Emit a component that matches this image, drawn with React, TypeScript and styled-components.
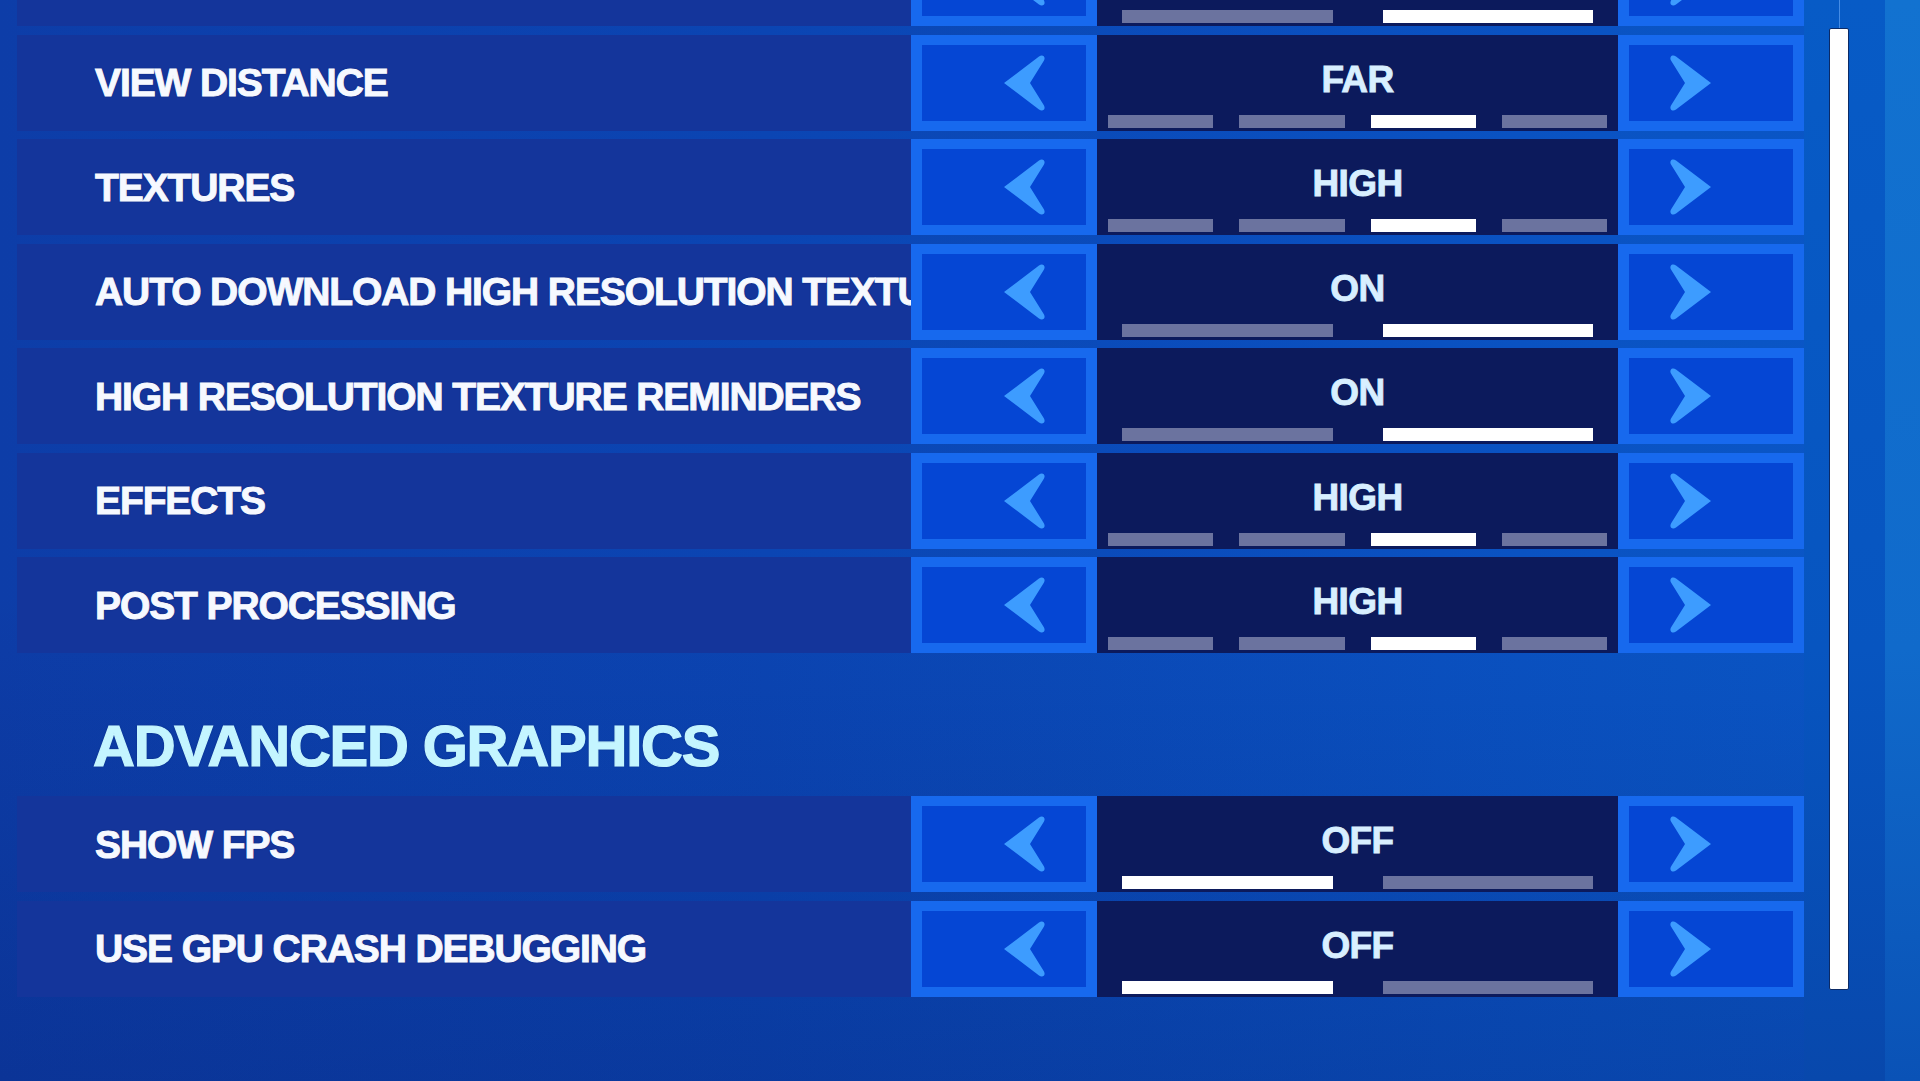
import React from "react";
import styled, { createGlobalStyle } from "styled-components";

const GlobalStyle = createGlobalStyle`
  html, body {
    margin: 0;
    padding: 0;
    width: 1920px;
    height: 1081px;
    overflow: hidden;
    background: #0b3ea6;
  }
  * {
    box-sizing: border-box;
  }
`;

const Screen = styled.div`
  width: 1920px;
  height: 1081px;
  display: flex;
  overflow: hidden;
  font-family: "Liberation Sans", Arial, sans-serif;
  font-weight: 700;
  background: linear-gradient(180deg, rgba(4, 20, 90, 0) 55%, rgba(4, 20, 90, 0.22) 100%),
    linear-gradient(90deg, #0d3da8 0%, #0b45b3 40%, #0a51c1 75%, #0a57c7 100%);
`;

const Main = styled.div`
  width: 1804px;
  height: 1081px;
  padding-left: 17px;
  overflow: hidden;
`;

// the list is scrolled, so the first row sits mostly above the top edge
const List = styled.div`
  display: flex;
  flex-direction: column;
  margin-top: -70px;
`;

const Group = styled.div`
  display: flex;
  flex-direction: column;
  gap: 8.5px;
`;

const Heading = styled.h2`
  margin: 64px 0 21px;
  padding-left: 76px;
  height: 58px;
  font-size: 58px;
  line-height: 58px;
  font-weight: 700;
  letter-spacing: -1.2px;
  color: #c4f5ff;
  -webkit-text-stroke: 1.2px #c4f5ff;
  text-shadow: 0 0 2px rgba(0, 10, 60, 0.6);
  white-space: nowrap;
`;

const Row = styled.div`
  display: grid;
  grid-template-columns: 894px 186px 521px 186px;
  height: 96px;
`;

const Label = styled.div`
  display: flex;
  align-items: center;
  padding-left: 78px;
  background: #14359b;
  overflow: hidden;
  white-space: nowrap;
  font-size: 39px;
  line-height: 39px;
  letter-spacing: -1.1px;
  color: #f6f9ff;
  -webkit-text-stroke: 1px #f6f9ff;
  text-shadow: 0 0 2px rgba(0, 10, 60, 0.6);
`;

const ArrowButton = styled.div<{ $side: "left" | "right" }>`
  display: flex;
  align-items: center;
  justify-content: center;
  border-style: solid;
  border-color: #1769ee;
  border-width: 10px 11px;
  background: #0546d4;
  padding-left: ${(p) => (p.$side === "left" ? "40px" : "0")};
  padding-right: ${(p) => (p.$side === "right" ? "40px" : "0")};
`;

const ValuePanel = styled.div`
  display: flex;
  flex-direction: column;
  padding: 26px 0 3px;
  background: #0c1a5c;
`;

const ValueText = styled.div`
  height: 37px;
  text-align: center;
  font-size: 37px;
  line-height: 37px;
  letter-spacing: -0.6px;
  color: #d8efff;
  -webkit-text-stroke: 0.9px #d8efff;
`;

const Bars = styled.div<{ $count: number }>`
  display: flex;
  margin-top: 17px;
  height: 13px;
  gap: ${(p) => (p.$count > 2 ? "26px" : "50px")};
  padding: 0 ${(p) => (p.$count > 2 ? "11px" : "25px")};
`;

const Bar = styled.div<{ $active: boolean }>`
  flex: 1;
  background: ${(p) => (p.$active ? "#ffffff" : "#6b739f")};
`;

const ScrollArea = styled.div`
  width: 81px;
  height: 1081px;
  padding-left: 25px;
  display: flex;
  flex-direction: column;
  background: linear-gradient(180deg, #075bc6 0%, #0755c0 60%, #0848ac 100%);
`;

const TrackLine = styled.div`
  width: 1px;
  height: 28px;
  margin-left: 10px;
  background: rgba(120, 180, 255, 0.55);
`;

const Thumb = styled.div`
  width: 20px;
  height: 962px;
  background: #ffffff;
  border: 1px solid #0b2a66;
  border-radius: 2px;
`;

const RightEdge = styled.div`
  flex: 1;
  height: 1081px;
  background: linear-gradient(180deg, #1272d0 0%, #106acb 60%, #0a52b6 100%);
`;

const Chevron = ({ dir }: { dir: "left" | "right" }) => (
  <svg width="44" height="58" viewBox="-1 -1 44 58">
    {dir === "left" ? (
      <path
        d="M1 28 L36 1.5 C39.5 -1 43 1.5 41 5.5 L27 28 L41 50.5 C43 54.5 39.5 57 36 54.5 Z"
        fill="#3d9cff"
      />
    ) : (
      <path
        d="M41 28 L6 1.5 C2.5 -1 -1 1.5 1 5.5 L15 28 L1 50.5 C-1 54.5 2.5 57 6 54.5 Z"
        fill="#3d9cff"
      />
    )}
  </svg>
);

type Setting = {
  id: string;
  label: string;
  value: string;
  options: number;
  selected: number;
};

// first entry is scrolled out of view, only its bottom edge shows
const graphics: Setting[] = [
  { id: "hidden", label: "", value: "", options: 2, selected: 1 },
  { id: "view", label: "VIEW DISTANCE", value: "FAR", options: 4, selected: 2 },
  { id: "tex", label: "TEXTURES", value: "HIGH", options: 4, selected: 2 },
  { id: "auto", label: "AUTO DOWNLOAD HIGH RESOLUTION TEXTURES", value: "ON", options: 2, selected: 1 },
  { id: "remind", label: "HIGH RESOLUTION TEXTURE REMINDERS", value: "ON", options: 2, selected: 1 },
  { id: "fx", label: "EFFECTS", value: "HIGH", options: 4, selected: 2 },
  { id: "post", label: "POST PROCESSING", value: "HIGH", options: 4, selected: 2 },
];

const advanced: Setting[] = [
  { id: "fps", label: "SHOW FPS", value: "OFF", options: 2, selected: 0 },
  { id: "gpu", label: "USE GPU CRASH DEBUGGING", value: "OFF", options: 2, selected: 0 },
];

const SettingRow = ({ setting }: { setting: Setting }) => (
  <Row>
    <Label>{setting.label}</Label>
    <ArrowButton $side="left">
      <Chevron dir="left" />
    </ArrowButton>
    <ValuePanel>
      <ValueText>{setting.value}</ValueText>
      <Bars $count={setting.options}>
        {Array.from({ length: setting.options }).map((_, i) => (
          <Bar key={i} $active={i === setting.selected} />
        ))}
      </Bars>
    </ValuePanel>
    <ArrowButton $side="right">
      <Chevron dir="right" />
    </ArrowButton>
  </Row>
);

export default function App() {
  return (
    <>
      <GlobalStyle />
      <Screen>
        <Main>
          <List>
            <Group>
              {graphics.map((s) => (
                <SettingRow key={s.id} setting={s} />
              ))}
            </Group>
            <Heading>ADVANCED GRAPHICS</Heading>
            <Group>
              {advanced.map((s) => (
                <SettingRow key={s.id} setting={s} />
              ))}
            </Group>
          </List>
        </Main>
        <ScrollArea>
          <TrackLine />
          <Thumb />
        </ScrollArea>
        <RightEdge />
      </Screen>
    </>
  );
}
